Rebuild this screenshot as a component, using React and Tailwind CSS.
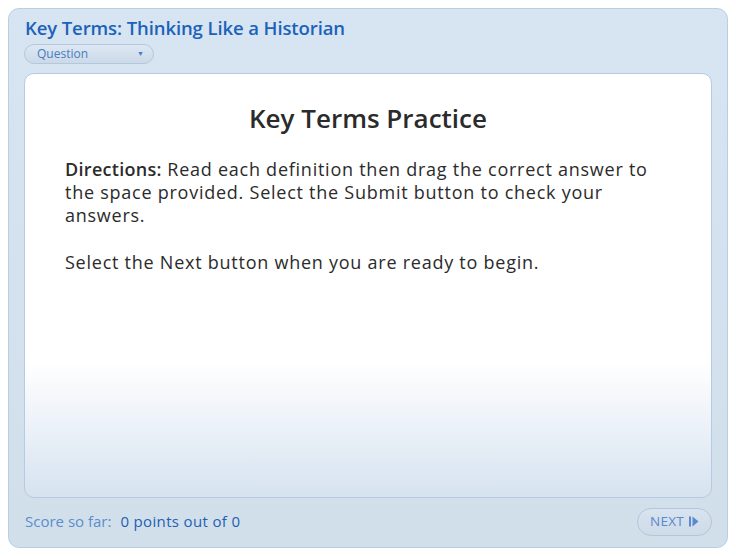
import React from "react";

const NextIcon = () => (
  <svg width="10" height="11" viewBox="0 0 10 11" className="ml-[5px]">
    <rect x="0" y="0.5" width="2" height="10" fill="currentColor" />
    <path d="M3.5 0.5 L9.5 5.5 L3.5 10.5 Z" fill="currentColor" />
  </svg>
);

const App = () => {
  return (
    <div className="w-[736px] h-[556px] bg-white p-2 font-['Open_Sans',sans-serif]">
      <div className="h-full flex flex-col rounded-[11px] border border-[#b9cde3] bg-gradient-to-b from-[#d7e5f3] to-[#d1dfeb] px-[15px] pt-[6px]">
        {/* Header */}
        <h1 className="text-[18.5px] leading-[25px] font-semibold text-[#1b62b8] tracking-[-0.1px] pl-[1px]">
          Key Terms: Thinking Like a Historian
        </h1>
        <button className="mt-[4px] w-[130px] h-[20px] rounded-full border border-[#b3c8de] bg-gradient-to-b from-[#dde8f3] to-[#cbd9e8] flex items-center justify-between pl-[12px] pr-[9px] text-[12px] text-[#4a7cc0]">
          <span>Question</span>
          <span className="text-[7px] text-[#4a7cc0]">▼</span>
        </button>

        {/* Card */}
        <div className="mt-[9px] h-[425px] rounded-[10px] border border-[#b6cbe2] bg-gradient-to-b from-white from-[68%] to-[#d6e3f0] flex flex-col">
          <h2 className="mt-[27px] text-center text-[26px] leading-[34px] font-semibold text-[#2b2b2b]">
            Key Terms Practice
          </h2>
          <div className="mt-[23px] pl-[40px] w-[638px] text-[18px] leading-[23px] tracking-[0.75px] text-[#2b2b2b]">
            <p>
              <span className="font-semibold tracking-[0.3px]">Directions:</span> Read each definition then drag the correct answer to
              the space provided. Select the Submit button to check your answers.
            </p>
            <p className="mt-[24px]">Select the Next button when you are ready to begin.</p>
          </div>
        </div>

        {/* Footer */}
        <div className="flex-1 flex items-center justify-between pb-[2px]">
          <div className="text-[15px] pl-[1px]">
            <span className="text-[#5b8dcc]">Score so far:</span>
            <span className="ml-[9px] text-[#1f5fb3] tracking-[0.35px]">0 points out of 0</span>
          </div>
          <button className="w-[75px] h-[28px] rounded-full border border-[#b3c6da] bg-gradient-to-b from-[#d8e4ef] to-[#cddbe8] flex items-center justify-center text-[13.5px] text-[#5a89cf] tracking-[0.3px]">
            NEXT
            <NextIcon />
          </button>
        </div>
      </div>
    </div>
  );
};

export default App;
